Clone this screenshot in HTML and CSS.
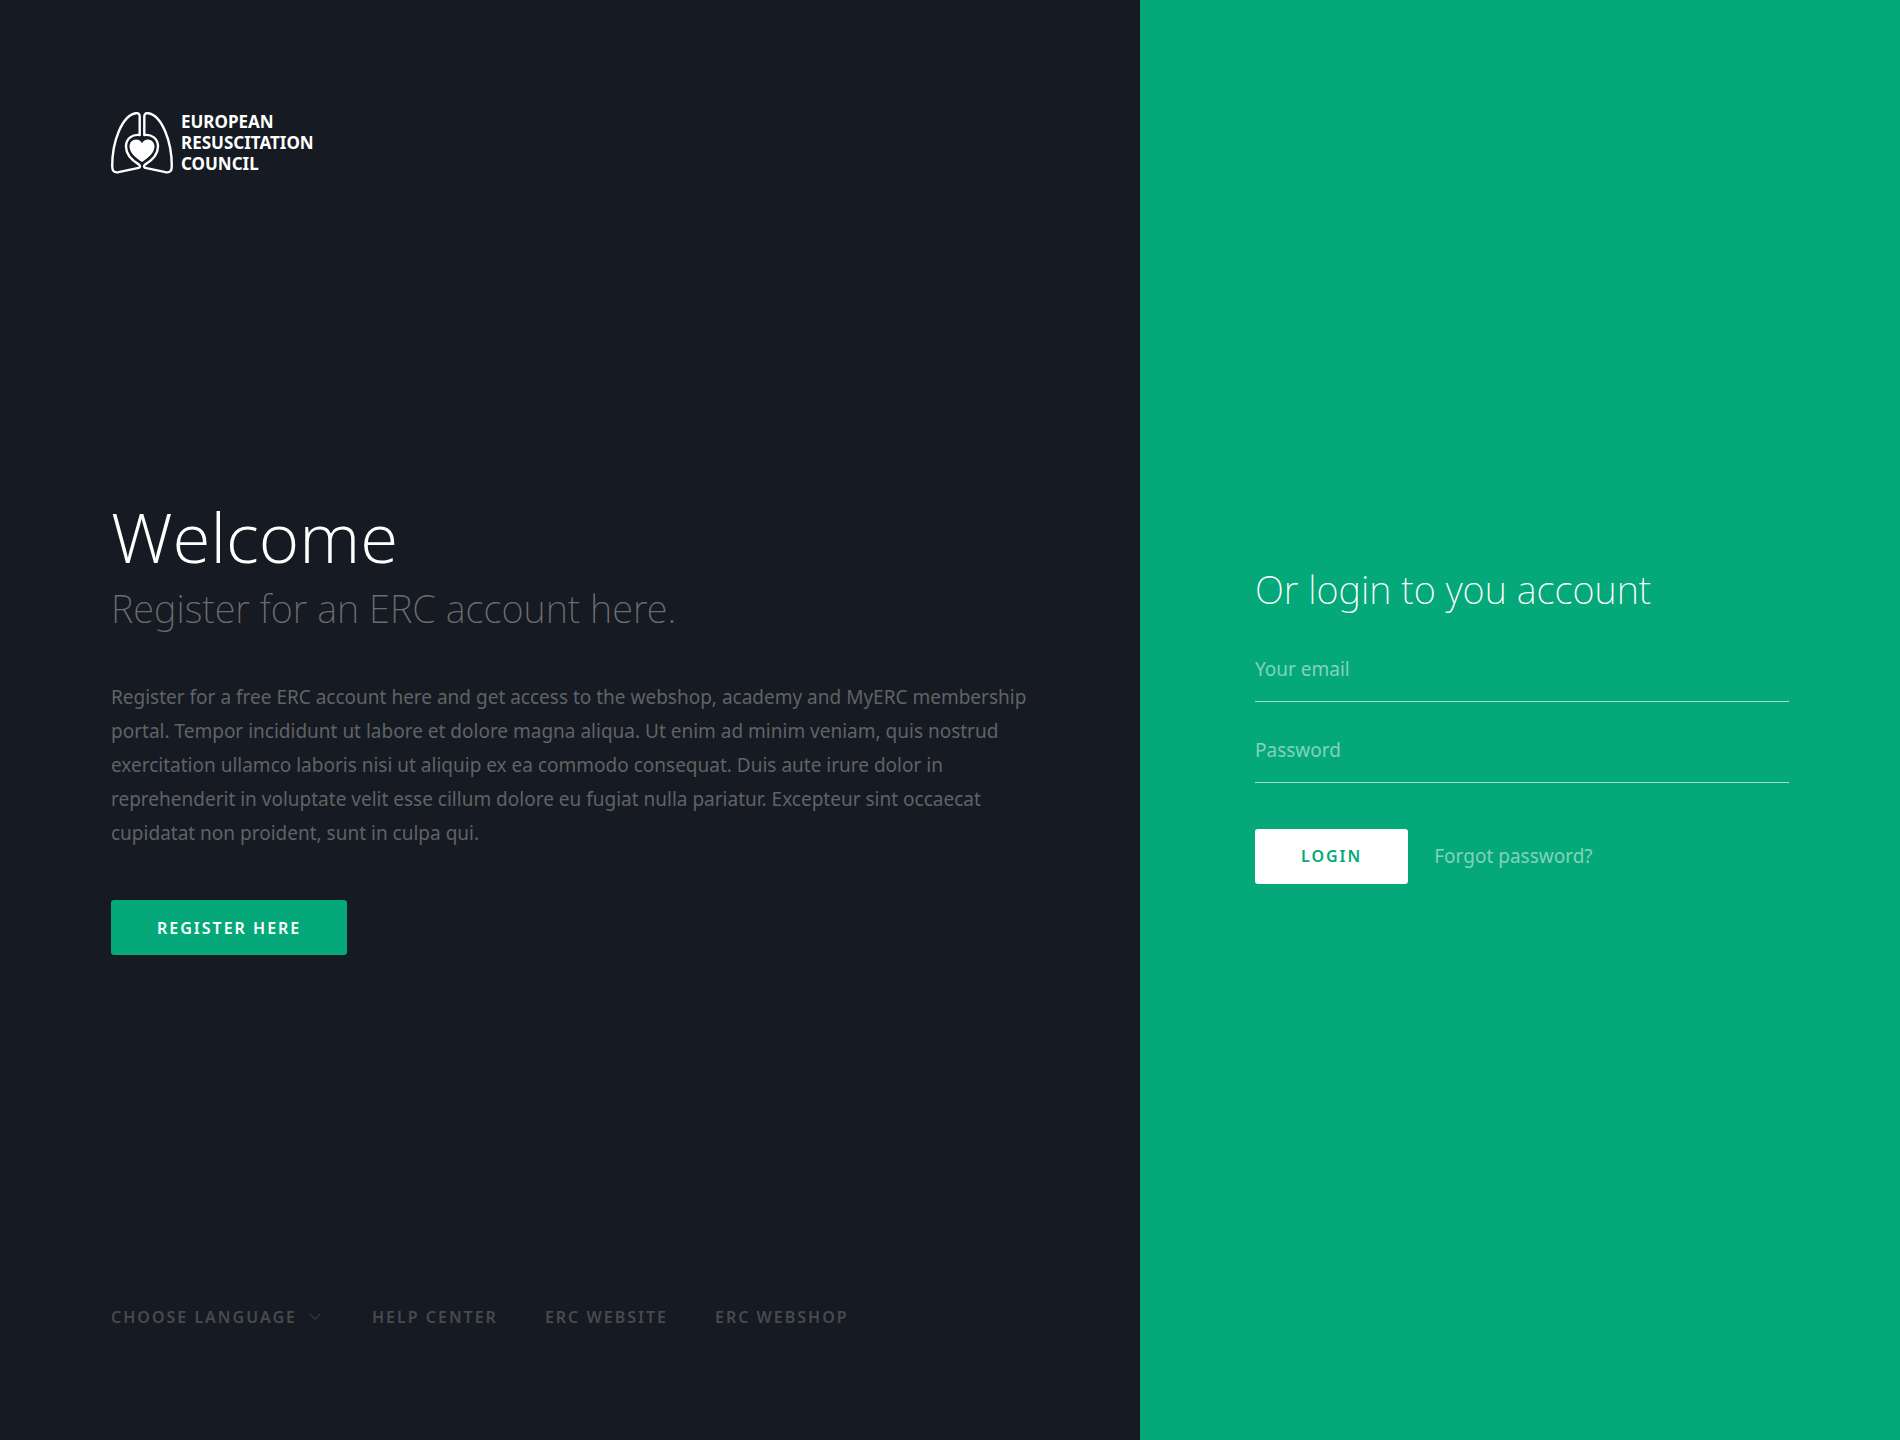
FILE: index.html
```html
<!DOCTYPE html>
<html lang="en">
<head>
  <meta charset="utf-8">
  <meta name="viewport" content="width=device-width, initial-scale=1">
  <title>European Resuscitation Council</title>
  <link rel="stylesheet" href="styles.css">
</head>
<body>
  <div class="page">
    <div class="intro">
      <header class="masthead">
        <a class="logo" href="#">
          <svg class="logo-mark" viewBox="0 0 62 62" aria-hidden="true">
            <g fill="none" stroke="#fff" stroke-width="2.4" stroke-linejoin="round">
              <path d="M28.700 23V4.500C28.700 2 27.500 1 25 1.200C11 3 1.200 30 1.200 54C1.200 59 3 61 7.500 60.200L26.500 56.200C29.200 55.600 29.700 54 28 52.600C22 49 15 43.500 15 34.500C15 26.500 21.500 22 28.700 23Z"/>
              <path d="M33.300 23V4.500C33.300 2 34.500 1 37 1.200C51 3 60.800 30 60.800 54C60.800 59 59 61 54.500 60.200L35.500 56.200C32.800 55.600 32.300 54 34 52.600C40 49 47 43.500 47 34.500C47 26.500 40.500 22 33.300 23Z"/>
            </g>
            <path fill="#fff" d="M31 50C25 46 18.500 41 18.500 34.500C18.500 30.500 21.500 27.500 25 27.500C27.800 27.500 30 29 31 31.200C32 29 34.200 27.500 37 27.500C40.500 27.500 43.500 30.500 43.500 34.500C43.500 41 37 46 31 50Z"/>
          </svg>
          <span class="logo-name">European<br>Resuscitation<br>Council</span>
        </a>
      </header>

      <main class="welcome">
        <h1>Welcome</h1>
        <p class="subtitle">Register for an ERC account here.</p>
        <p class="copy">Register for a free ERC account here and get access to the webshop, academy and MyERC membership portal. Tempor incididunt ut labore et dolore magna aliqua. Ut enim ad minim veniam, quis nostrud exercitation ullamco laboris nisi ut aliquip ex ea commodo consequat. Duis aute irure dolor in reprehenderit in voluptate velit esse cillum dolore eu fugiat nulla pariatur. Excepteur sint occaecat cupidatat non proident, sunt in culpa qui.</p>
        <button class="button button-green" type="button">Register here</button>
      </main>

      <footer class="links">
        <div class="language">
          <select aria-label="Choose language">
            <option>Choose language</option>
            <option>English</option>
            <option>Français</option>
          </select>
          <svg viewBox="0 0 12 8" aria-hidden="true"><path d="M1 1L6 6.500L11 1" fill="none" stroke="currentColor"/></svg>
        </div>
        <a href="#">Help center</a>
        <a href="#">ERC website</a>
        <a href="#">ERC webshop</a>
      </footer>
    </div>

    <form class="login">
      <h2>Or login to you account</h2>
      <div class="fields">
        <input type="email" placeholder="Your email" aria-label="Your email">
        <input type="password" placeholder="Password" aria-label="Password">
      </div>
      <div class="actions">
        <button class="button button-white" type="submit">Login</button>
        <a href="#">Forgot password?</a>
      </div>
    </form>
  </div>
</body>
</html>
```
FILE: styles.css
```css
:root {
  --dark: #161a22;
  --green: #05a878;
  --muted: #606365;
  --dim: #484a4d;
  --faded: #82d3bb;
}

* {
  box-sizing: border-box;
  margin: 0;
}

body {
  font-family: "Noto Sans", sans-serif;
  font-size: 19px;
  line-height: 24px;
  color: #fff;
}

a {
  color: inherit;
  text-decoration: none;
}

.page {
  display: grid;
  grid-template-columns: 3fr 2fr;
  min-height: 100vh;
}

/* Left panel */
.intro {
  display: flex;
  flex-direction: column;
  padding: 111px;
  background: var(--dark);
}

.masthead {
  display: flex;
}

.logo {
  display: flex;
  align-items: center;
  gap: 8px;
}

.logo-mark {
  width: 62px;
  height: 62px;
}

.logo-name {
  font-size: 17px;
  font-weight: 700;
  line-height: 21px;
  text-transform: uppercase;
}

.welcome {
  display: flex;
  flex: 1;
  flex-direction: column;
  align-items: flex-start;
  justify-content: center;
  padding-bottom: 24px;
}

h1 {
  font-family: "Open Sans", sans-serif;
  font-size: 69px;
  font-weight: 300;
  line-height: 72px;
}

.subtitle {
  margin-top: 12px;
  font-size: 38px;
  font-weight: 200;
  line-height: 48px;
  color: #6b6e70;
}

.copy {
  margin: 48px 0 50px;
  line-height: 34px;
  color: var(--muted);
}

.button {
  height: 55px;
  padding: 0 46px;
  border: 0;
  border-radius: 3px;
  font: 600 16px/24px "Noto Sans", sans-serif;
  letter-spacing: 2px;
  text-transform: uppercase;
}

.button-green {
  background: var(--green);
  color: #fff;
}

.button-white {
  background: #fff;
  color: var(--green);
}

.links {
  display: flex;
  flex-wrap: wrap;
  gap: 24px 47px;
  font-size: 16px;
  font-weight: 600;
  letter-spacing: 2px;
  text-transform: uppercase;
  color: var(--dim);
}

.language {
  display: flex;
  align-items: center;
  gap: 12px;
  margin-right: 4px;
}

.language select {
  appearance: none;
  padding: 0;
  border: 0;
  background: transparent;
  font: inherit;
  letter-spacing: inherit;
  text-transform: inherit;
  color: inherit;
}

.language svg {
  width: 12px;
  height: 8px;
}

/* Right panel */
.login {
  display: flex;
  flex-direction: column;
  justify-content: center;
  padding: 50px 111px 48px 115px;
  background: var(--green);
}

h2 {
  font-size: 38px;
  font-weight: 200;
  line-height: 60px;
}

.fields {
  display: grid;
  gap: 24px;
  margin: 26px 0 46px;
}

.fields input {
  width: 100%;
  padding: 12px 0 20px;
  border: 0;
  border-bottom: 1px solid #a0dec9;
  border-radius: 0;
  outline: 0;
  background: transparent;
  font: inherit;
  color: #fff;
}

.fields input::placeholder {
  color: var(--faded);
  opacity: 1;
}

.actions {
  display: flex;
  align-items: center;
  gap: 26px;
  color: var(--faded);
}
```
